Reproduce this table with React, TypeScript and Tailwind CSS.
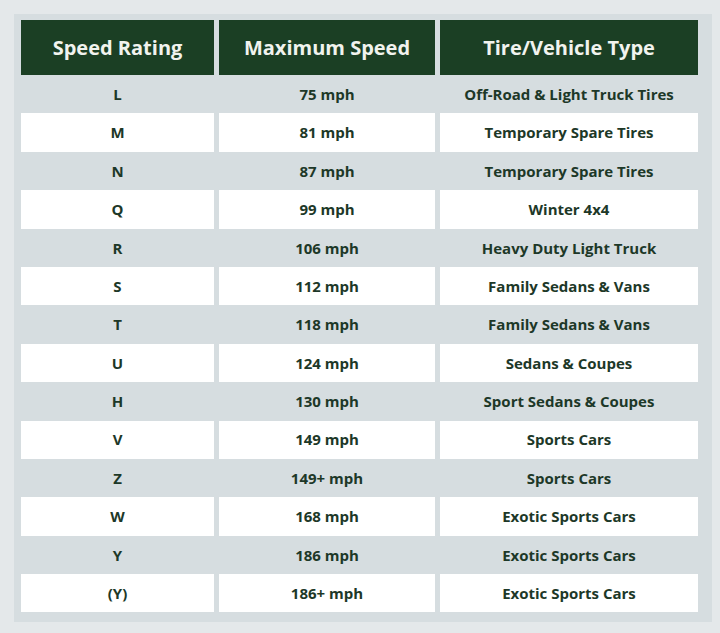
import React from "react";

const rows: [string, string, string][] = [
  ["L", "75 mph", "Off-Road & Light Truck Tires"],
  ["M", "81 mph", "Temporary Spare Tires"],
  ["N", "87 mph", "Temporary Spare Tires"],
  ["Q", "99 mph", "Winter 4x4"],
  ["R", "106 mph", "Heavy Duty Light Truck"],
  ["S", "112 mph", "Family Sedans & Vans"],
  ["T", "118 mph", "Family Sedans & Vans"],
  ["U", "124 mph", "Sedans & Coupes"],
  ["H", "130 mph", "Sport Sedans & Coupes"],
  ["V", "149 mph", "Sports Cars"],
  ["Z", "149+ mph", "Sports Cars"],
  ["W", "168 mph", "Exotic Sports Cars"],
  ["Y", "186 mph", "Exotic Sports Cars"],
  ["(Y)", "186+ mph", "Exotic Sports Cars"],
];

export default function App() {
  return (
    <div
      className="w-[720px] h-[633px] bg-[#e4e8ea] pt-[14px] pl-[14px] pr-[8px] pb-[11px]"
      style={{ fontFamily: '"Open Sans", "Liberation Sans", sans-serif' }}
    >
      <div className="w-full h-full bg-[#d6dde0] pt-[6px] pl-[7px]">
        <div className="grid grid-cols-[193px_216px_258px] gap-x-[5px]">
          {["Speed Rating", "Maximum Speed", "Tire/Vehicle Type"].map((h) => (
            <div
              key={h}
              className="h-[55px] bg-[#1b3f24] flex items-center justify-center text-[#f1f3ee] text-[20px] font-bold"
            >
              {h}
            </div>
          ))}
        </div>
        <div className="flex flex-col">
          {rows.map((r, i) => (
            <div key={i} className="grid grid-cols-[193px_216px_258px] gap-x-[5px] h-[38.4px]">
              {r.map((c, j) => (
                <div
                  key={j}
                  className={`flex items-center justify-center text-[#1d3828] text-[15px] font-bold ${
                    i % 2 === 1 ? "bg-white" : ""
                  }`}
                >
                  {c}
                </div>
              ))}
            </div>
          ))}
        </div>
      </div>
    </div>
  );
}
